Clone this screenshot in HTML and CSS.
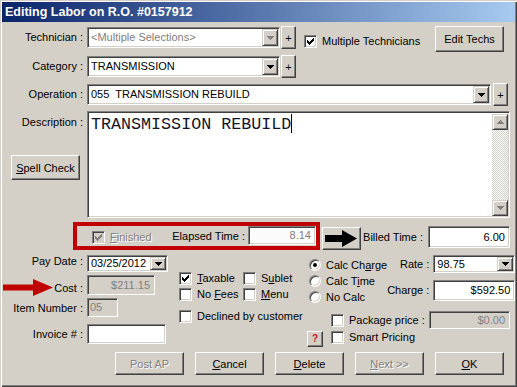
FILE: index.html
```html
<!DOCTYPE html>
<html>
<head>
    <title>Editing Labor on R.O. #0157912</title>
    <link rel="stylesheet" href="styles.css">
</head>
<body>
<div class="window">
    <div class="titlebar">Editing Labor on R.O. #0157912</div>

    <div class="row row-tech">
        <span class="lbl">Technician :</span>
        <div class="field combo combo-short disabled">
            <span class="combo-text">&lt;Multiple Selections&gt;</span>
            <span class="drop"><svg width="7" height="4" viewBox="0 0 7 4"><path d="M0 0h7v1h-1v1h-1v1h-1v1h-1v-1h-1v-1h-1v-1h-1z"/></svg></span>
        </div>
        <button class="btn plus">+</button>
        <label class="check multi"><span class="box"><svg width="11" height="11" viewBox="1 1 11 11"><path d="M3 5h1v3h-1zM4 6h1v3h-1zM5 7h1v3h-1zM6 6h1v3h-1zM7 5h1v3h-1zM8 4h1v3h-1zM9 3h1v3h-1z"/></svg></span><span>Multiple Technicians</span></label>
        <button class="btn edit-techs">Edit Techs</button>
    </div>

    <div class="row row-cat">
        <span class="lbl">Category :</span>
        <div class="field combo combo-short">
            <span class="combo-text">TRANSMISSION</span>
            <span class="drop"><svg width="7" height="4" viewBox="0 0 7 4"><path d="M0 0h7v1h-1v1h-1v1h-1v1h-1v-1h-1v-1h-1v-1h-1z"/></svg></span>
        </div>
        <button class="btn plus">+</button>
    </div>

    <div class="row row-op">
        <span class="lbl">Operation :</span>
        <div class="field combo combo-long">
            <span class="combo-text">055&nbsp; TRANSMISSION REBUILD</span>
            <span class="drop"><svg width="7" height="4" viewBox="0 0 7 4"><path d="M0 0h7v1h-1v1h-1v1h-1v1h-1v-1h-1v-1h-1v-1h-1z"/></svg></span>
        </div>
        <button class="btn plus plus-op">+</button>
    </div>

    <div class="row row-desc">
        <div class="desc-left">
            <span class="lbl">Description :</span>
            <button class="btn spell"><u>S</u>pell Check</button>
        </div>
        <div class="field desc">
            <div class="desc-text">TRANSMISSION REBUILD<span class="caret"></span></div>
            <div class="scroll">
                <span class="sbtn"><svg width="7" height="4" viewBox="0 0 7 4"><path d="M3 0h1v1h1v1h1v1h1v1h-7v-1h1v-1h1v-1h1z"/></svg></span>
                <span class="track"></span>
                <span class="sbtn"><svg width="7" height="4" viewBox="0 0 7 4"><path d="M0 0h7v1h-1v1h-1v1h-1v1h-1v-1h-1v-1h-1v-1h-1z"/></svg></span>
            </div>
        </div>
    </div>

    <div class="row row-elapsed">
        <div class="redbox">
            <label class="check finished disabled"><span class="box"><svg width="11" height="11" viewBox="1 1 11 11"><path d="M3 5h1v3h-1zM4 6h1v3h-1zM5 7h1v3h-1zM6 6h1v3h-1zM7 5h1v3h-1zM8 4h1v3h-1zM9 3h1v3h-1z"/></svg></span><span><u>F</u>inished</span></label>
            <span class="elapsed-lbl">Elapsed Time :</span>
            <div class="field num elapsed">8.14</div>
        </div>
        <button class="btn arrow-btn"><svg width="37" height="21" viewBox="0 0 37 21"><path d="M2 7h17v-5l15 8.5-15 8.5v-5h-17z"/></svg></button>
        <span class="billed-lbl">Billed Time :</span>
        <div class="field num billed">6.00</div>
    </div>

    <div class="lower">
        <div class="col-a">
            <div class="row row-pay">
                <span class="lbl">Pay Date :</span>
                <div class="field combo combo-date">
                    <span class="combo-text">03/25/2012</span>
                    <span class="drop"><svg width="7" height="4" viewBox="0 0 7 4"><path d="M0 0h7v1h-1v1h-1v1h-1v1h-1v-1h-1v-1h-1v-1h-1z"/></svg></span>
                </div>
            </div>
            <div class="row row-cost">
                <span class="lbl cost-lbl">
                    <svg class="red-arrow" width="52" height="22" viewBox="0 0 52 22"><path d="M1 9.5h30v-5.5l20 8.5-20 8.5v-5.5h-30z"/></svg>
                    <span>Cost :</span>
                </span>
                <div class="field num readonly cost">$211.15</div>
            </div>
            <div class="row row-item">
                <span class="lbl">Item Number :</span>
                <div class="field readonly item">05</div>
            </div>
            <div class="row row-invoice">
                <span class="lbl">Invoice # :</span>
                <div class="field invoice"></div>
            </div>
        </div>

        <div class="col-b">
            <div class="check-pair first">
                <label class="check"><span class="box"><svg width="11" height="11" viewBox="1 1 11 11"><path d="M3 5h1v3h-1zM4 6h1v3h-1zM5 7h1v3h-1zM6 6h1v3h-1zM7 5h1v3h-1zM8 4h1v3h-1zM9 3h1v3h-1z"/></svg></span><span><u>T</u>axable</span></label>
                <label class="check"><span class="box"></span><span>S<u>u</u>blet</span></label>
            </div>
            <div class="check-pair">
                <label class="check"><span class="box"></span><span>No <u>F</u>ees</span></label>
                <label class="check"><span class="box"></span><span><u>M</u>enu</span></label>
            </div>
            <label class="check declined"><span class="box"></span><span>Declined by customer</span></label>
        </div>

        <div class="col-c">
            <div class="calc">
                <div class="radios">
                    <label class="radio"><span class="dot on"></span><span>Calc Ch<u>a</u>rge</span></label>
                    <label class="radio"><span class="dot"></span><span>Calc T<u>i</u>me</span></label>
                    <label class="radio"><span class="dot"></span><span>No Calc</span></label>
                </div>
                <div class="money">
                    <div class="row row-rate">
                        <span class="rlbl">Rate :</span>
                        <div class="field combo combo-rate">
                            <span class="combo-text">98.75</span>
                            <span class="drop"><svg width="7" height="4" viewBox="0 0 7 4"><path d="M0 0h7v1h-1v1h-1v1h-1v1h-1v-1h-1v-1h-1v-1h-1z"/></svg></span>
                        </div>
                    </div>
                    <div class="row row-charge">
                        <span class="rlbl">Charge :</span>
                        <div class="field num charge">$592.50</div>
                    </div>
                </div>
            </div>
            <div class="row row-package">
                <span class="box"></span>
                <span class="rlbl">Package price :</span>
                <div class="field num readonly package">$0.00</div>
            </div>
            <div class="row row-smart">
                <button class="btn help">?</button>
                <label class="check"><span class="box"></span><span>Smart Pricing</span></label>
            </div>
        </div>
    </div>

    <div class="buttons">
        <button class="btn wide disabled">Post AP</button>
        <button class="btn wide"><u>C</u>ancel</button>
        <button class="btn wide"><u>D</u>elete</button>
        <button class="btn wide disabled"><u>N</u>ext &gt;&gt;</button>
        <button class="btn wide"><u>O</u>K</button>
    </div>
</div>
</body>
</html>
```

FILE: styles.css
```css
* {
    box-sizing: border-box;
}
body {
    margin: 0;
    background: #D4D0C8;
    font-family: "Liberation Sans", Arial, sans-serif;
    font-size: 11px;
    color: #000;
}
u {
    text-decoration-thickness: 1px;
    text-underline-offset: 1px;
}
.window {
    width: 517px;
    height: 387px;
    background: #D4D0C8;
    box-shadow: inset 1px 1px 0 #D4D0C8, inset 2px 2px 0 #fff, inset -1px -1px 0 #404040, inset -2px -2px 0 #808080;
    overflow: hidden;
}
.titlebar {
    height: 20px;
    margin: 2px 2px 0;
    padding-left: 3px;
    background: linear-gradient(to right, #0A246A, #A6CAF0);
    color: #fff;
    font-weight: bold;
    font-size: 12.5px;
    line-height: 20px;
}

/* generic controls */
.row {
    display: flex;
    align-items: flex-start;
}
.lbl {
    flex: none;
    width: 83px;
    margin-right: 4px;
    text-align: right;
    white-space: nowrap;
}
.field {
    background: #fff;
    border: 1px solid;
    border-color: #808080 #fff #fff #808080;
    box-shadow: inset 1px 1px 0 #404040, inset -1px -1px 0 #D4D0C8;
    white-space: nowrap;
}
.field.readonly {
    background: #D4D0C8;
    color: #808080;
}
.num {
    text-align: right;
    padding-right: 4px;
}
.btn {
    background: #D4D0C8;
    border: 1px solid;
    border-color: #fff #404040 #404040 #fff;
    box-shadow: inset -1px -1px 0 #808080;
    font: inherit;
    color: #000;
    padding: 0;
    flex: none;
}
.btn.disabled, .check.disabled {
    color: #808080;
    text-shadow: 1px 1px 0 #fff;
}
.combo {
    display: flex;
    padding: 1px;
    flex: none;
}
.combo-text {
    flex: 1;
    padding-left: 2px;
    overflow: hidden;
}
.combo.disabled .combo-text {
    color: #808080;
}
.drop, .sbtn {
    width: 16px;
    flex: none;
    display: flex;
    align-items: center;
    justify-content: center;
    background: #D4D0C8;
    border: 1px solid;
    border-color: #D4D0C8 #404040 #404040 #D4D0C8;
    box-shadow: inset 1px 1px 0 #fff, inset -1px -1px 0 #808080;
}
.drop svg, .sbtn svg {
    fill: #000;
}
.combo.disabled .drop svg, .sbtn svg {
    fill: #808080;
}
.check {
    display: flex;
    align-items: center;
    line-height: 13px;
    white-space: nowrap;
}
.box {
    flex: none;
    width: 13px;
    height: 13px;
    margin-right: 5px;
    background: #fff;
    border: 1px solid;
    border-color: #808080 #fff #fff #808080;
    box-shadow: inset 1px 1px 0 #404040, inset -1px -1px 0 #D4D0C8;
}
.box svg {
    display: block;
    fill: #000;
}
.check.disabled .box {
    background: #D4D0C8;
}
.check.disabled .box svg {
    fill: #808080;
}

/* top rows */
.row-tech {
    margin-top: 4px;
    height: 26px;
}
.row-tech .lbl, .row-cat .lbl, .row-op .lbl {
    margin-top: 1px;
    line-height: 21px;
}
.combo-short, .combo-long {
    height: 21px;
    margin-top: 1px;
    line-height: 17px;
}
.combo-short {
    width: 193px;
}
.combo-long {
    width: 404px;
}
.plus {
    width: 15px;
    height: 23px;
    margin-left: 1px;
}
.plus-op {
    margin-left: 2px;
}
.multi {
    margin-left: 8px;
    margin-top: 9px;
}
.edit-techs {
    width: 69px;
    height: 26px;
    margin-left: auto;
    margin-right: 13px;
}
.row-cat {
    margin-top: 3px;
    height: 23px;
}
.row-op {
    margin-top: 5px;
    height: 23px;
}

/* description */
.row-desc {
    margin-top: 5px;
    height: 107px;
}
.desc-left {
    width: 87px;
    flex: none;
    display: flex;
    flex-direction: column;
}
.desc-left .lbl {
    margin-top: 5px;
    line-height: 13px;
}
.spell {
    width: 69px;
    height: 25px;
    margin-left: 11px;
    margin-top: 26px;
}
.desc {
    width: 423px;
    height: 107px;
    display: flex;
}
.desc-text {
    flex: 1;
    padding: 2px 0 0 3px;
    font-family: "Liberation Mono", "Courier New", monospace;
    font-size: 16.7px;
    line-height: 18px;
    color: #141428;
}
.caret {
    display: inline-block;
    width: 1px;
    height: 19px;
    background: #000;
    vertical-align: -4px;
}
.scroll {
    width: 16px;
    margin: 2px 1px 1px 0;
    display: flex;
    flex-direction: column;
}
.sbtn {
    height: 16px;
}
.track {
    flex: 1;
    background: repeating-conic-gradient(#fff 0% 25%, #D4D0C8 0% 50%) 0 0 / 2px 2px;
}

/* elapsed / billed */
.row-elapsed {
    margin-top: 4px;
    height: 28px;
}
.redbox {
    margin-left: 73px;
    width: 247px;
    height: 28px;
    border: 4px solid #C00000;
    display: flex;
    align-items: flex-start;
}
.finished {
    margin-left: 15px;
    margin-top: 5px;
}
.elapsed-lbl {
    margin-left: auto;
    margin-right: 3px;
    line-height: 20px;
}
.elapsed {
    width: 68px;
    height: 19px;
    line-height: 17px;
    color: #808080;
    background: #fbfbfb;
}
.arrow-btn {
    width: 39px;
    height: 23px;
    margin-left: 2px;
    margin-top: 5px;
}
.arrow-btn svg {
    display: block;
}
.billed-lbl {
    margin-left: auto;
    margin-right: 5px;
    margin-top: 4px;
    line-height: 22px;
}
.billed {
    width: 82px;
    height: 22px;
    margin-top: 4px;
    margin-right: 7px;
    line-height: 20px;
}

/* lower section */
.lower {
    display: flex;
    margin-top: 5px;
    height: 88px;
}
.col-a {
    width: 168px;
    flex: none;
}
.row-pay .lbl {
    line-height: 13px;
}
.combo-date {
    width: 81px;
    height: 17px;
    line-height: 13px;
}
.row-cost {
    margin-top: 3px;
}
.cost-lbl {
    display: flex;
    align-items: flex-start;
}
.red-arrow {
    margin-left: 2px;
    fill: #C00000;
}
.cost-lbl span {
    margin-left: auto;
    margin-top: 6px;
    line-height: 14px;
}
.cost {
    width: 68px;
    height: 20px;
    line-height: 18px;
}
.row-item {
    margin-top: 1px;
}
.row-item .lbl {
    line-height: 21px;
}
.item {
    width: 31px;
    height: 19px;
    line-height: 17px;
    padding-left: 2px;
}
.row-invoice {
    margin-top: 5px;
}
.row-invoice .lbl {
    line-height: 21px;
}
.invoice {
    width: 79px;
    height: 20px;
}
.col-b {
    width: 128px;
    flex: none;
    margin-left: 11px;
    padding-top: 17px;
}
.check-pair {
    display: flex;
    margin-bottom: 3px;
}
.check-pair .check {
    width: 69px;
}
.declined {
    margin-top: 9px;
}
.col-c {
    width: 203px;
    flex: none;
}
.calc {
    display: flex;
}
.radios {
    padding-top: 2px;
    margin-left: 2px;
}
.radio {
    display: flex;
    align-items: center;
    height: 16px;
    white-space: nowrap;
}
.dot {
    width: 12px;
    height: 12px;
    margin-right: 5px;
    border-radius: 50%;
    background: #fff;
    border: 1px solid;
    border-color: #808080 #fff #fff #808080;
    box-shadow: inset 1px 1px 0 #404040, inset -1px -1px 0 #D4D0C8;
    display: flex;
    align-items: center;
    justify-content: center;
}
.dot.on::after {
    content: "";
    width: 4px;
    height: 4px;
    border-radius: 50%;
    background: #000;
}
.money {
    flex: 1;
}
.rlbl {
    flex: 1;
    text-align: right;
    padding-right: 4px;
    white-space: nowrap;
}
.row-rate .rlbl {
    line-height: 18px;
}
.combo-rate {
    width: 82px;
    height: 18px;
    line-height: 14px;
}
.row-charge {
    margin-top: 7px;
}
.row-charge .rlbl {
    line-height: 21px;
}
.charge {
    width: 82px;
    height: 21px;
    line-height: 19px;
}
.row-package {
    margin-top: 6px;
    align-items: center;
}
.row-package .box {
    margin-left: 24px;
}
.package {
    width: 82px;
    height: 18px;
    line-height: 16px;
}
.row-smart {
    margin-top: 1px;
}
.help {
    width: 16px;
    height: 16px;
    margin-top: 1px;
    color: #D0102C;
    font-weight: bold;
    font-size: 10px;
    line-height: 12px;
}
.row-smart .check {
    margin-left: 8px;
    margin-top: 1px;
}

/* bottom buttons */
.buttons {
    display: flex;
    gap: 11px;
    padding-left: 115px;
    margin-top: 9px;
}
.wide {
    width: 69px;
    height: 23px;
}
```
